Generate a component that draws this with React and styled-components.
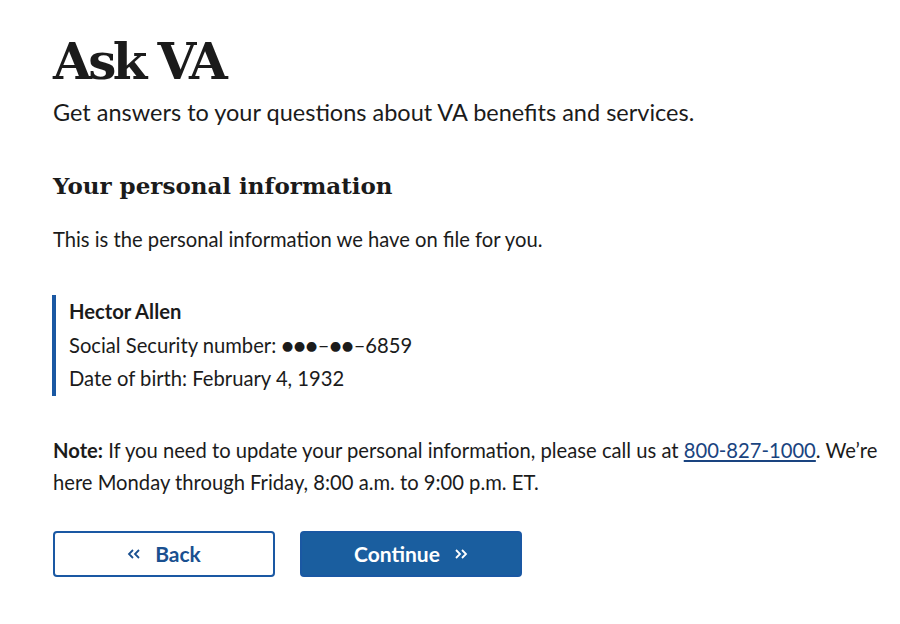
import React from "react"
import styled, { createGlobalStyle } from "styled-components"

const GlobalStyle = createGlobalStyle`
  body {
    margin: 0;
    background: #fff;
    color: #1b1b1b;
    font-family: Lato, "Open Sans", sans-serif;
  }
`

const Page = styled.main`
  padding: 30px 20px 0 53px;
`

const Title = styled.h1`
  font-family: "DejaVu Serif", serif;
  font-weight: 700;
  font-size: 50px;
  line-height: 64px;
  margin: 0;
  letter-spacing: -3.6px;
`

const Lead = styled.p`
  font-size: 23.5px;
  line-height: 36px;
  margin: 0 0 40px;
`

const SectionTitle = styled.h2`
  font-family: "DejaVu Serif", serif;
  font-weight: 700;
  font-size: 23px;
  line-height: 32px;
  margin: 0 0 21px;
`

const Text = styled.p`
  font-size: 20.2px;
  line-height: 32px;
  margin: 0 0 ${(p) => p.$gap || 0}px;
`

const InfoBox = styled.div`
  border-left: 4px solid #1a58a3;
  padding: 0 0 0 13px;
  margin: 0 0 38px -1px;
  display: flex;
  flex-direction: column;
  font-size: 20.2px;
  line-height: 33.5px;
`

const Name = styled.span`
  font-weight: 700;
`

const PhoneLink = styled.a`
  color: #1a4480;
`

const Actions = styled.div`
  display: flex;
  gap: 25px;
  margin-top: 33px;
`

const Button = styled.button`
  width: 222px;
  height: 46px;
  border-radius: 4px;
  font-family: Lato, "Open Sans", sans-serif;
  font-size: 21px;
  font-weight: 700;
  display: flex;
  align-items: center;
  justify-content: center;
  gap: 14px;
  border: 2px solid #1a58a3;
  background: ${(p) => (p.$primary ? "#1a5e9f" : "#fff")};
  color: ${(p) => (p.$primary ? "#fff" : "#1a5090")};
`

const Chevrons = ({ dir }) => (
  <svg width="14" height="12" viewBox="0 0 14 12" fill="none" stroke="currentColor" strokeWidth="1.8">
    {dir === "left" ? (
      <>
        <path d="M6 2 L2 6 L6 10" />
        <path d="M12 2 L8 6 L12 10" />
      </>
    ) : (
      <>
        <path d="M2 2 L6 6 L2 10" />
        <path d="M8 2 L12 6 L8 10" />
      </>
    )}
  </svg>
)

export default function App() {
  return (
    <>
      <GlobalStyle />
      <Page>
        <Title>Ask VA</Title>
        <Lead>Get answers to your questions about VA benefits and services.</Lead>
        <SectionTitle>Your personal information</SectionTitle>
        <Text $gap={40}>This is the personal information we have on file for you.</Text>
        <InfoBox>
          <Name>Hector Allen</Name>
          <span>Social Security number: ●●●–●●–6859</span>
          <span>Date of birth: February 4, 1932</span>
        </InfoBox>
        <Text>
          <strong>Note:</strong> If you need to update your personal information, please call us at{" "}
          <PhoneLink href="#">800-827-1000</PhoneLink>. We’re here Monday through Friday, 8:00 a.m. to 9:00 p.m. ET.
        </Text>
        <Actions>
          <Button>
            <Chevrons dir="left" />
            Back
          </Button>
          <Button $primary>
            Continue
            <Chevrons dir="right" />
          </Button>
        </Actions>
      </Page>
    </>
  )
}
